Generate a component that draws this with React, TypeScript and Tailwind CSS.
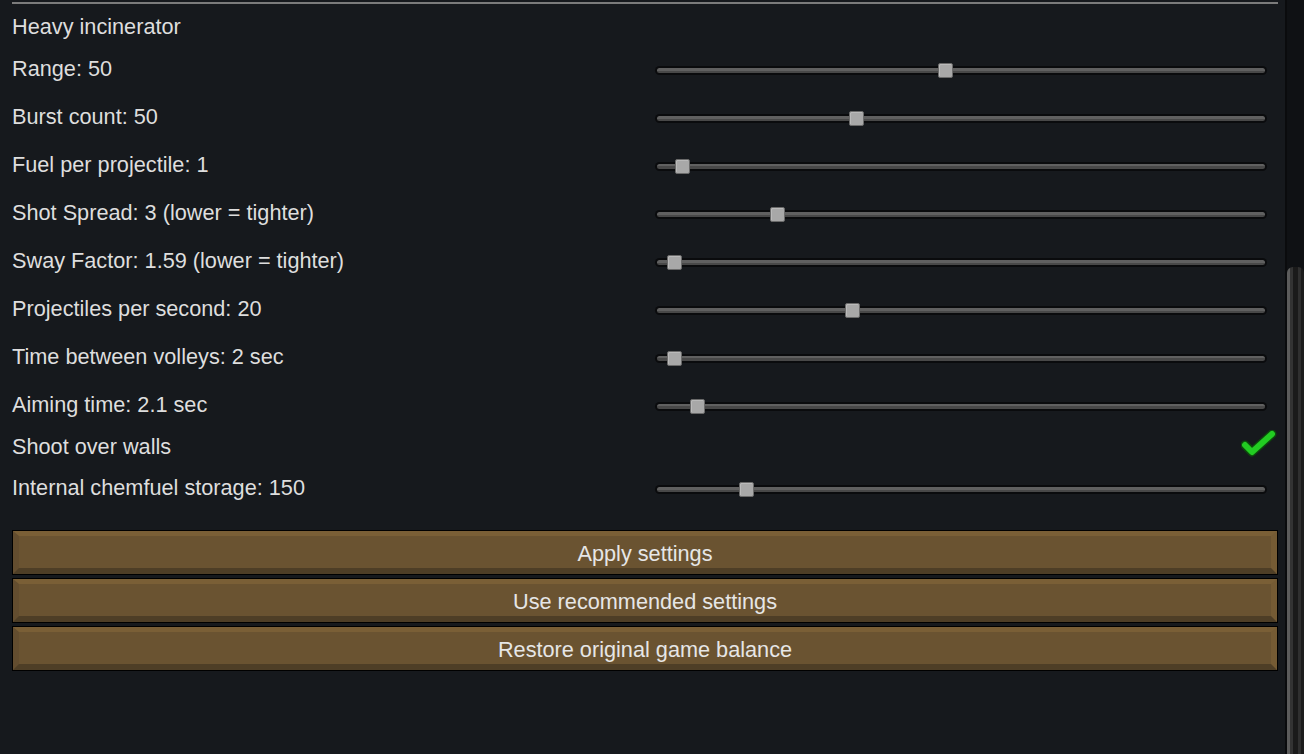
import React from "react";

type Row =
  | { kind: "slider"; label: string; pos: number; h?: number }
  | { kind: "check"; label: string };

const rows: Row[] = [
  { kind: "slider", label: "Range: 50", pos: 290 },
  { kind: "slider", label: "Burst count: 50", pos: 201 },
  { kind: "slider", label: "Fuel per projectile: 1", pos: 27 },
  { kind: "slider", label: "Shot Spread: 3 (lower = tighter)", pos: 122 },
  { kind: "slider", label: "Sway Factor: 1.59 (lower = tighter)", pos: 19 },
  { kind: "slider", label: "Projectiles per second: 20", pos: 197 },
  { kind: "slider", label: "Time between volleys: 2 sec", pos: 19 },
  { kind: "slider", label: "Aiming time: 2.1 sec", pos: 42 },
  { kind: "check", label: "Shoot over walls" },
  { kind: "slider", label: "Internal chemfuel storage: 150", pos: 91, h: 54 },
];

function Slider({ pos }: { pos: number }) {
  return (
    <div className="relative w-[612px] h-[9px] rounded-full bg-[#0a0b0d] px-[2px] py-[2px] mr-[11px]">
      <div className="h-[5px] w-full rounded-full bg-[linear-gradient(#606060_0_50%,#484848_50%_100%)]" />
      <div
        className="absolute top-[-3px] w-[15px] h-[15px] rounded-[2px] border border-[#6a6a6a] bg-[#a8a8a8] shadow-[inset_1px_1px_0_#bababa]"
        style={{ left: pos - 7 }}
      />
    </div>
  );
}

function Check() {
  return (
    <svg width="36" height="32" viewBox="0 0 36 32" className="mr-[1px]">
      <polyline
        points="4,15 11,22 31,4"
        fill="none"
        stroke="#0c4a0c"
        strokeWidth="9"
        strokeLinecap="round"
        strokeLinejoin="round"
      />
      <polyline
        points="4,15 11,22 31,4"
        fill="none"
        stroke="#22cc22"
        strokeWidth="6"
        strokeLinecap="round"
        strokeLinejoin="round"
      />
    </svg>
  );
}

function Btn({ label }: { label: string }) {
  return (
    <div className="h-[45px] border border-black">
      <div className="h-full flex items-center justify-center bg-[#6a5331] border-t-[5px] border-t-[#7a5f36] border-l-[6px] border-l-[#634d2f] border-r-[6px] border-r-[#755b34] border-b-[6px] border-b-[#4e3e26] text-[#e6e6e6] pt-[4px]">
        {label}
      </div>
    </div>
  );
}

export default function App() {
  return (
    <div
      className="w-[1304px] h-[754px] bg-[#16191d] flex overflow-hidden text-[21.7px] leading-none text-[#dedede]"
      style={{ fontFamily: '"Liberation Sans", Arial, sans-serif' }}
    >
      <div className="w-[1285px] pl-[12px] pr-[7px] flex flex-col">
        <div className="mt-[2px] h-[2px] bg-[#7b7b7b]" />
        <div className="h-[42px] flex items-center pt-[3px]">Heavy incinerator</div>
        {rows.map((r, i) =>
          r.kind === "slider" ? (
            <div
              key={i}
              className="flex items-center justify-between"
              style={{ height: r.h ?? 48 }}
            >
              <span className="pb-[3px]">{r.label}</span>
              <Slider pos={r.pos} />
            </div>
          ) : (
            <div key={i} className="h-[32px] flex items-center justify-between">
              <span className="pt-[1px]">{r.label}</span>
              <Check />
            </div>
          )
        )}
        <div className="mt-[14px] flex flex-col gap-[3px]">
          <Btn label="Apply settings" />
          <Btn label="Use recommended settings" />
          <Btn label="Restore original game balance" />
        </div>
      </div>
      <div className="w-[19px] h-full bg-[#0f1114] border-l-2 border-l-[#0a0b0d] flex flex-col">
        <div className="mt-[267px] flex-1 rounded-t-[6px] bg-[linear-gradient(90deg,#5c5c5c_0_18%,#333333_18%_35%,#1a1a1a_35%_65%,#2f2f2f_65%_82%,#1c1c1c_82%_100%)]" />
      </div>
    </div>
  );
}
